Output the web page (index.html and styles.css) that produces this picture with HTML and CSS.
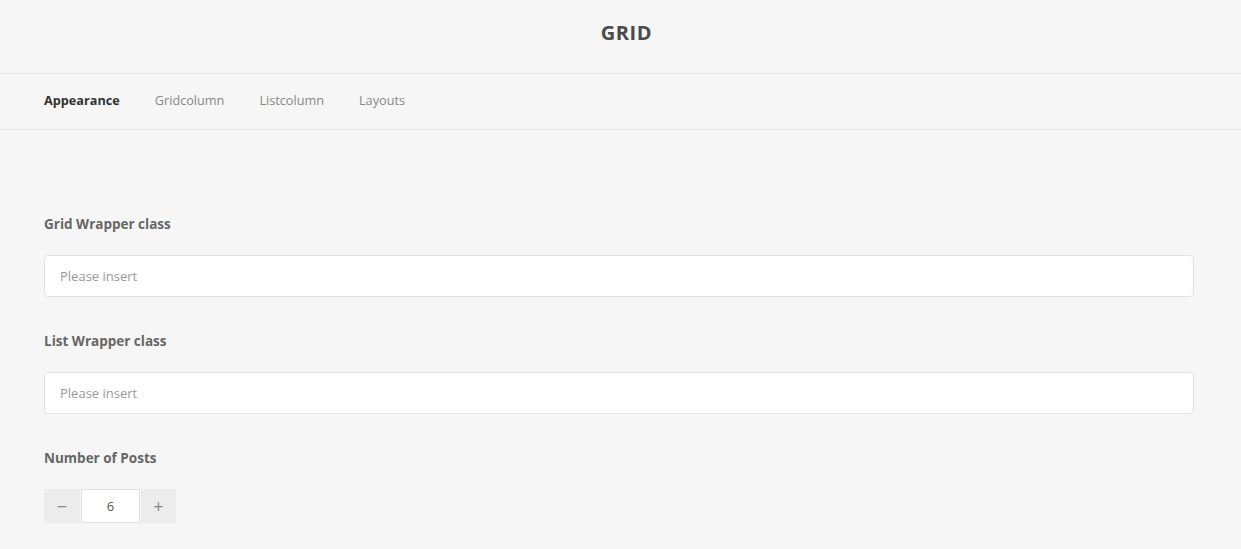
FILE: index.html
```html
<!DOCTYPE html>
<html>
<head>
<meta charset="utf-8">
<link rel="stylesheet" href="styles.css">
</head>
<body>
<header class="header"><h1 class="title">GRID</h1></header>
<nav class="tabs">
  <span class="tab active">Appearance</span>
  <span class="tab">Gridcolumn</span>
  <span class="tab">Listcolumn</span>
  <span class="tab">Layouts</span>
</nav>
<main class="content">
  <div class="field">
    <label class="label">Grid Wrapper class</label>
    <input class="input" type="text" placeholder="Please insert">
  </div>
  <div class="field">
    <label class="label">List Wrapper class</label>
    <input class="input" type="text" placeholder="Please insert">
  </div>
  <div class="field">
    <label class="label">Number of Posts</label>
    <div class="stepper">
      <button class="step">&#8722;</button>
      <input class="step-value" type="text" value="6">
      <button class="step">+</button>
    </div>
  </div>
</main>
</body>
</html>
```
FILE: styles.css
```css
* { box-sizing: border-box; }
html, body { margin: 0; padding: 0; background: #f6f6f6; }
body { font-family: "Open Sans", "Noto Sans", sans-serif; color: #555; }
.header { height: 74px; border-bottom: 1px solid #e4e4e4; display: flex; align-items: center; justify-content: center; padding: 0 0 8px 12px; }
.title { margin: 0; font-size: 20px; font-weight: 700; color: #4a4a4a; letter-spacing: 0.6px; }
.tabs { height: 56px; border-bottom: 1px solid #e4e4e4; display: flex; align-items: center; gap: 35px; padding: 0 44px 4px; }
.tab { font-size: 12.7px; color: #888; }
.tab.active { font-weight: 700; color: #333; }
.content { padding: 85px 44px 0 44px; display: flex; flex-direction: column; gap: 35px; }
.field { display: flex; flex-direction: column; gap: 22px; }
.label { font-size: 13.5px; font-weight: 700; color: #666; }
.input { width: 100%; max-width: 1150px; height: 42px; border: 1px solid #e2e2e2; border-radius: 4px; background: #fff; padding: 0 15px; font-family: inherit; font-size: 13px; color: #555; outline: none; }
.input::placeholder { color: #999; }
.stepper { display: flex; gap: 1px; height: 34px; }
.step { width: 36px; height: 34px; border: none; background: #ececec; color: #888; font-size: 18px; font-family: inherit; padding: 0; }
.step:last-child { width: 35px; }
.step-value { width: 59px; height: 34px; border: 1px solid #e2e2e2; background: #fff; text-align: center; font-family: inherit; font-size: 13px; color: #555; outline: none; }
```
